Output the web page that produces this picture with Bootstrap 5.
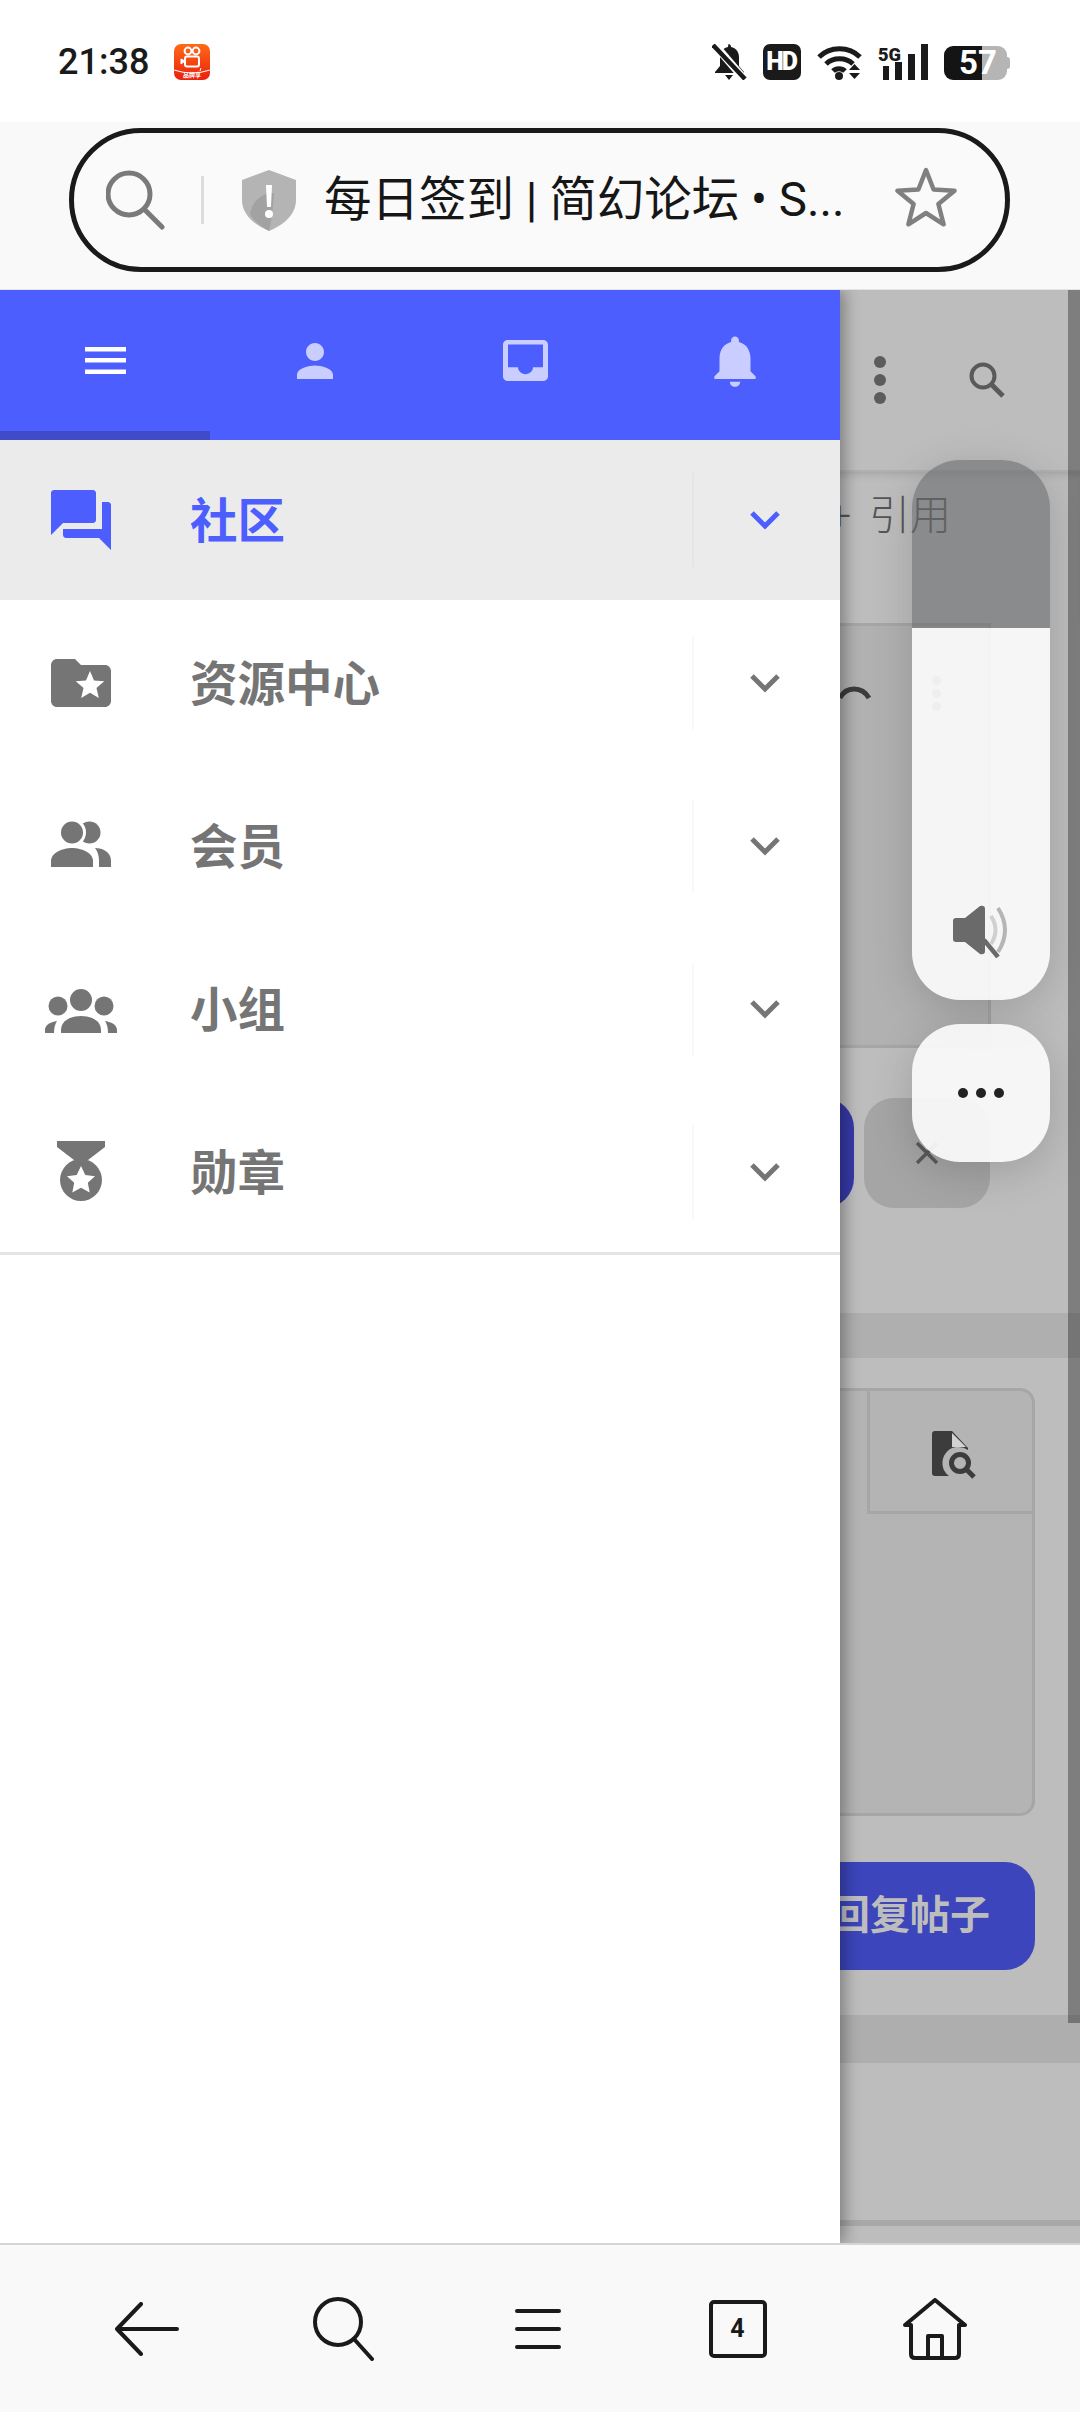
<!DOCTYPE html>
<html lang="zh">
<head>
  <meta charset="UTF-8">
  <title>每日签到 | 简幻论坛</title>
  <link href="https://cdn.jsdelivr.net/npm/bootstrap@5.3.0/dist/css/bootstrap.min.css" rel="stylesheet">
  <style>
    html, body { width: 1080px; height: 2412px; overflow: hidden; }
    body { font-family: Roboto, "Noto Sans CJK SC", sans-serif; background: #fff; }
    svg { display: block; flex-shrink: 0; }

    .status-bar { height: 122px; padding: 44px 70px 0 58px; background: #fff; }
    .clock { font-size: 36px; line-height: 36px; font-weight: 500; color: #1a1a1a; width: 116px; }
    .hd-tag { width: 38px; height: 36px; border-radius: 7px; background: #1a1a1a; color: #fff; font-size: 25px; font-weight: 900; line-height: 36px; text-align: center; letter-spacing: -2px; padding-right: 2px; }
    .sig-ico { margin-top: -2px; }
    .batt { width: 63px; height: 34px; margin-top: 2px; margin-right: 3px; border-radius: 9px; background: linear-gradient(90deg, #141414 38px, #b5b5b5 38px); color: #fff; font-size: 33px; font-weight: 700; line-height: 34px; padding-left: 15px; }
    .batt::after { content: ""; position: absolute; top: 11px; right: -3px; width: 3px; height: 12px; border-radius: 0 3px 3px 0; background: #b5b5b5; }

    .url-bar { height: 168px; padding: 6px 0 0 69px; background: #f9f9f9; border-bottom: 1px solid #e3e3e8; }
    .url-pill { width: 941px; height: 144px; border: 5px solid #1a1a1a; border-radius: 72px; background: #fafafa; padding: 0 48px 0 32px; }
    .url-sep { width: 3px; height: 48px; background: #dcdcdc; margin: 0 38px 0 35px; }
    .url-title { margin-left: 28px; font-size: 47.5px; line-height: 60px; color: #161616; white-space: nowrap; }
    .url-star { margin-top: -6px; }

    .stage { height: 1953px; overflow: hidden; background: #bdbdbd; }
    .hdr-row { height: 180px; padding: 66px 75px 0 0; gap: 83px; }
    .hdr-row svg { margin-top: 6px; }
    .dots-v { gap: 6px; }
    .dots-v i { display: block; width: 12px; height: 12px; border-radius: 50%; background: #5c5c5c; }
    .quote-row { height: 153px; padding: 19px 0 0 828px; font-size: 41px; line-height: 50px; font-weight: 300; color: #555; box-shadow: inset 0 6px 8px -4px rgba(0,0,0,.14); border-top: 2px solid #b0b0b0; }
    .quote-row span { width: 41px; }
    .post-box { width: 991px; height: 425px; padding: 56px 0 0 825px; background: #b1b1b1; border: 0 solid #a6a6a6; border-width: 3px 3px 3px 0; border-bottom-right-radius: 15px; }
    .post-more { margin-left: 57px; margin-top: -6px; gap: 4px; }
    .post-more i { display: block; width: 9px; height: 9px; border-radius: 50%; background: #555; }
    .btn-row { margin-top: 50px; padding-left: 700px; gap: 10px; }
    .btn-send, .btn-cancel { height: 110px; border: 0; border-radius: 30px; padding: 0; }
    .btn-send { width: 154px; background: #3639a8; }
    .btn-cancel { width: 126px; background: #a5a5a5; }
    .band-a { margin-top: 105px; height: 45px; background: #afafaf; }
    .editor { margin-top: 30px; width: 1035px; height: 428px; background: #b4b4b4; border: 3px solid #a6a6a6; border-left: 0; border-radius: 0 15px 15px 0; }
    .editor-cell { width: 165px; height: 123px; padding: 8px 0 0 6px; border-left: 3px solid #a6a6a6; border-bottom: 3px solid #a6a6a6; }
    .reply-wrap { margin-top: 46px; padding-right: 45px; }
    .btn-reply { width: 400px; height: 108px; border: 0; border-radius: 30px; background: #3c45bb; color: #bdbdbd; font-size: 40px; font-weight: 700; line-height: 108px; padding: 0 45px 0 0; text-align: right; }
    .band-b { margin-top: 45px; height: 48px; background: #aeaeae; }
    .rule-b { margin-top: 157px; height: 6px; background: #a8a8a8; }

    .page-scroll { top: 0; right: 0; width: 12px; height: 1733px; background: rgba(0,0,0,.33); }

    .drawer { top: 0; left: 0; bottom: 0; width: 840px; background: #fff; box-shadow: 5px 0 14px rgba(0,0,0,.32); }
    .drawer-tabs { height: 150px; background: #4d5eff; }
    .drawer-tab { width: 210px; height: 150px; padding-bottom: 9px; color: #c9cdff; }
    .drawer-tab.on { color: #fff; border-bottom: 9px solid #3f4bc8; padding-bottom: 0; }
    .list-group-flush > .menu-row { height: 163px; padding: 0 0 0 45px; border: 0; border-bottom: 3px solid transparent; background-clip: padding-box; color: #757575; font-size: 47.5px; font-weight: 700; line-height: 60px; border-radius: 0; }
    .list-group-flush > .menu-row.on { background-color: #ebebec; color: #4d5eff; }
    .list-group-flush > .menu-row.end { border-bottom: 3px solid #e4e4e4; }
    .menu-row span { margin-top: 3px; }
    .menu-ico { width: 72px; height: 72px; margin-right: 73px; }
    .menu-caret { width: 148px; height: 94px; padding-right: 4px; border-left: 2px solid rgba(0,0,0,.025); }

    .vol-panel { top: 170px; left: 912px; width: 138px; height: 540px; border-radius: 48px; overflow: hidden; box-shadow: 0 10px 44px rgba(0,0,0,.16); }
    .vol-fill { height: 168px; background: rgba(104,105,107,.6); }
    .vol-rest { height: 372px; padding-bottom: 42px; background: rgba(250,250,250,.93); }
    .more-panel { top: 734px; left: 912px; width: 138px; height: 138px; border-radius: 48px; gap: 8px; background: rgba(250,250,250,.93); box-shadow: 0 10px 44px rgba(0,0,0,.16); }
    .more-panel i { display: block; width: 10px; height: 10px; border-radius: 50%; background: #222; }

    .bottom-bar { height: 169px; padding: 0 0 0 48px; background: #f9f9f9; border-top: 2px solid #d5d5d5; }
    .bottom-slot { width: 197px; height: 167px; }
    .bottom-slot .menu-lines { margin-right: 6px; }
    .tab-count { width: 58px; height: 58px; border: 4px solid #1a1a1a; border-radius: 5px; font-size: 25px; font-weight: 700; line-height: 50px; text-align: center; color: #1a1a1a; }
  </style>
</head>
<body>
  <div class="status-bar d-flex">
    <div class="clock">21:38</div>
    <svg width="36" height="36" viewBox="0 0 36 36">
      <defs><linearGradient id="appg" x1="0" y1="0" x2="0" y2="1"><stop offset="0" stop-color="#ff6a16"/><stop offset="1" stop-color="#e9200e"/></linearGradient></defs>
      <rect width="36" height="36" rx="7" fill="url(#appg)"/>
      <circle cx="14" cy="7" r="3.4" fill="none" stroke="#fff" stroke-width="2"/>
      <circle cx="22" cy="7" r="3.4" fill="none" stroke="#fff" stroke-width="2"/>
      <rect x="11" y="12.5" width="14" height="10" rx="2" fill="none" stroke="#fff" stroke-width="2"/>
      <path d="M11 17l-4-2v5zM27 24l-1 3" fill="#fff" stroke="#fff" stroke-width="1"/>
      <path d="M0 26q18 6 36 0" fill="none" stroke="#fff" stroke-width="1"/>
      <text x="18" y="33" font-size="6" font-weight="700" text-anchor="middle" fill="#fff" font-family="Noto Sans CJK SC, sans-serif">品牌享</text>
    </svg>
    <div class="d-flex ms-auto gap-3">
      <svg width="35" height="36" viewBox="0 0 35 36">
        <path d="M16 0c2 0 3 1 3 3 5 1 8 5 8 10v9l5 6v1H3v-1l5-6v-9c0-5 3-9 8-10 0-2 1-3 0-3z" fill="#1a1a1a"/>
        <path d="M13 31h8l-4 5z" fill="#1a1a1a"/>
        <path d="M2 0l31 36" stroke="#fff" stroke-width="8"/>
        <path d="M1 1l32 34" stroke="#1a1a1a" stroke-width="4.5"/>
      </svg>
      <div class="hd-tag">HD</div>
      <svg width="45" height="36" viewBox="0 0 45 36" fill="none" stroke="#1a1a1a" stroke-width="5">
        <path d="M2 13C13 2 32 2 43 13"/>
        <path d="M9 20C16 13 29 13 36 20"/>
        <path d="M16 27c3-3 9-3 12 0"/>
        <circle cx="22" cy="32" r="4" fill="#1a1a1a" stroke="none"/>
        <path d="M32 26h11l-5.500-6zM32 29h11l-5.500 6z" fill="#1a1a1a" stroke="none"/>
      </svg>
      <svg class="sig-ico" width="50" height="38" viewBox="0 -2 50 38">
        <text x="0" y="17" font-size="19" font-weight="900" fill="#1a1a1a" font-family="Roboto, sans-serif" textLength="23" lengthAdjust="spacingAndGlyphs">5G</text>
        <rect x="5" y="22" width="6" height="14" fill="#1a1a1a"/>
        <rect x="17" y="18" width="7" height="18" fill="#1a1a1a"/>
        <rect x="30" y="10" width="7" height="26" fill="#1a1a1a"/>
        <rect x="43" y="0" width="7" height="36" fill="#1a1a1a"/>
      </svg>
      <div class="batt position-relative">57</div>
    </div>
  </div>

  <div class="url-bar">
    <div class="url-pill d-flex align-items-center">
      <svg width="60" height="60" viewBox="0 0 60 60" fill="none" stroke="#7a7a7a" stroke-width="5" stroke-linecap="round">
        <circle cx="23" cy="24" r="21"/>
        <path d="M39 40l17 17"/>
      </svg>
      <div class="url-sep"></div>
      <svg width="54" height="61" viewBox="0 0 54 61">
        <path d="M27 0l27 10v20c0 14-12 25-27 31C12 55 0 44 0 30V10z" fill="#b4b4b4"/>
        <path d="M8 44c2-13 12-21 24-21-1 14-2 26-5 38C19 57 12 51 8 44z" fill="#a2a2a2"/>
        <path d="M24 15h6l-1 22h-4z" fill="#fff"/>
        <circle cx="27" cy="44" r="4" fill="#fff"/>
      </svg>
      <div class="url-title">每日签到 | 简幻论坛 • S...</div>
      <svg class="url-star ms-auto" width="62" height="62" viewBox="0 0 62 62">
        <path d="M31 4l7.600 19.500 20.900 1.200-16.100 13.300 5.200 20.300L31 47 13.400 58.300l5.200-20.300L2.500 24.700l20.900-1.200z" fill="none" stroke="#808080" stroke-width="4.500" stroke-linejoin="round"/>
      </svg>
    </div>
  </div>

  <div class="stage position-relative">
    <div class="page-back">
      <div class="hdr-row d-flex justify-content-end">
        <div class="dots-v d-flex flex-column"><i></i><i></i><i></i></div>
        <svg width="36" height="36" viewBox="0 0 36 36" fill="none" stroke="#5a5a5a" stroke-width="4">
          <circle cx="14" cy="14" r="11.500"/>
          <path d="M22 22l12 12" stroke-width="5"/>
        </svg>
      </div>
      <div class="quote-row d-flex"><span>+</span>引用</div>
      <div class="post-box d-flex">
        <svg width="50" height="24" viewBox="0 0 50 24" fill="none" stroke="#3c3c3c" stroke-width="5">
          <path d="M15 16c6-12 22-12 29 0"/>
        </svg>
        <div class="post-more d-flex flex-column"><i></i><i></i><i></i></div>
      </div>
      <div class="btn-row d-flex">
        <button class="btn btn-send" type="button"></button>
        <button class="btn btn-cancel d-flex align-items-center justify-content-center" type="button">
          <svg width="24" height="24" viewBox="0 0 24 24" stroke="#5a5a5a" stroke-width="3.500"><path d="M2 2l20 20M22 2L2 22"/></svg>
        </button>
      </div>
      <div class="band-a"></div>
      <div class="editor d-flex justify-content-end align-items-start">
        <div class="editor-cell d-flex align-items-center justify-content-center">
          <svg width="44" height="48" viewBox="0 0 44 48">
            <path d="M3 0h17l16 17v2a14 14 0 0 0-19 26H3a3 3 0 0 1-3-3V3a3 3 0 0 1 3-3z" fill="#3c3c3c"/>
            <path d="M20 2v14h14z" fill="#d2d2d2"/>
            <circle cx="28" cy="32" r="8.500" fill="none" stroke="#3c3c3c" stroke-width="5"/>
            <path d="M34 38l8 8" stroke="#3c3c3c" stroke-width="5"/>
          </svg>
        </div>
      </div>
      <div class="reply-wrap d-flex justify-content-end">
        <button class="btn btn-reply" type="button">回复帖子</button>
      </div>
      <div class="band-b"></div>
      <div class="rule-b"></div>
    </div>

    <div class="page-scroll position-absolute"></div>

    <div class="vol-panel position-absolute">
      <div class="vol-fill"></div>
      <div class="vol-rest d-flex align-items-end justify-content-center">
        <svg width="56" height="53" viewBox="0 0 56 53" fill="none">
          <path d="M3 13h9L27 1q5-1 5 3v42q0 4-5 3L12 37H3q-3 0-3-3V16q0-3 3-3z" fill="#6a6a6a"/>
          <path d="M31 35l14 17" stroke="#6a6a6a" stroke-width="4.500"/>
          <path d="M38 11q9 14 0 28" stroke="#d0d0d0" stroke-width="4"/>
          <path d="M45 3q14 22 0 44" stroke="#b5b5b5" stroke-width="4"/>
        </svg>
      </div>
    </div>
    <div class="more-panel position-absolute d-flex align-items-center justify-content-center"><i></i><i></i><i></i></div>

    <div class="drawer position-absolute">
      <div class="drawer-tabs d-flex">
        <div class="drawer-tab on d-flex align-items-center justify-content-center">
          <svg width="41" height="27" viewBox="0 0 41 27" fill="currentColor"><rect width="41" height="4.500"/><rect y="11" width="41" height="4.500"/><rect y="22.500" width="41" height="4.500"/></svg>
        </div>
        <div class="drawer-tab d-flex align-items-center justify-content-center">
          <svg width="54" height="54" viewBox="0 0 24 24" fill="currentColor"><path d="M12 12c2.210 0 4-1.790 4-4s-1.790-4-4-4-4 1.790-4 4 1.790 4 4 4zm0 2c-2.670 0-8 1.340-8 4v2h16v-2c0-2.660-5.330-4-8-4z"/></svg>
        </div>
        <div class="drawer-tab d-flex align-items-center justify-content-center">
          <svg width="45" height="41" viewBox="3 3 18 18" preserveAspectRatio="none" fill="currentColor"><path d="M19 3H5c-1.110 0-2 .89-2 2v14c0 1.100.88 2 2 2h14c1.100 0 2-.9 2-2V5c0-1.110-.9-2-2-2zm0 12h-4c0 1.660-1.350 3-3 3s-3-1.340-3-3H5V5h14v10z"/></svg>
        </div>
        <div class="drawer-tab d-flex align-items-center justify-content-center">
          <svg width="62" height="62" viewBox="0 0 24 24" fill="currentColor"><path d="M12 22c1.100 0 2-.9 2-2h-4c0 1.100.89 2 2 2zm6-6v-5c0-3.070-1.640-5.640-4.500-6.320V4c0-.83-.67-1.500-1.500-1.500s-1.500.67-1.500 1.500v.68C7.630 5.360 6 7.920 6 11v5l-2 2v1h16v-1l-2-2z"/></svg>
        </div>
      </div>
      <div class="list-group list-group-flush">
        <div class="list-group-item menu-row on d-flex align-items-center">
          <svg class="menu-ico" viewBox="0 0 24 24" fill="currentColor"><path d="M21 6h-2v9H6v2c0 .55.45 1 1 1h11l4 4V7c0-.55-.45-1-1-1zm-4 6V3c0-.55-.45-1-1-1H3c-.55 0-1 .45-1 1v14l4-4h10c.55 0 1-.45 1-1z"/></svg>
          <span>社区</span>
          <div class="menu-caret ms-auto d-flex align-items-center justify-content-center">
            <svg width="30" height="20" viewBox="0 0 30 20" fill="none" stroke="currentColor" stroke-width="5"><path d="M2 3l13 13L28 3"/></svg>
          </div>
        </div>
        <div class="list-group-item menu-row d-flex align-items-center">
          <svg class="menu-ico" viewBox="0 0 24 24" fill="currentColor"><path d="M20 6h-8l-2-2H4c-1.100 0-1.990.9-1.990 2L2 18c0 1.100.9 2 2 2h16c1.100 0 2-.9 2-2V8c0-1.100-.9-2-2-2zm-2.060 11L15 15.280 12.060 17l.78-3.330-2.590-2.240 3.410-.29L15 8l1.340 3.140 3.410.29-2.590 2.240.78 3.330z"/></svg>
          <span>资源中心</span>
          <div class="menu-caret ms-auto d-flex align-items-center justify-content-center">
            <svg width="30" height="20" viewBox="0 0 30 20" fill="none" stroke="currentColor" stroke-width="5"><path d="M2 3l13 13L28 3"/></svg>
          </div>
        </div>
        <div class="list-group-item menu-row d-flex align-items-center">
          <svg class="menu-ico" viewBox="0 0 72 72" fill="currentColor">
            <circle cx="44.500" cy="22.500" r="11"/>
            <circle cx="27" cy="22.500" r="12.500" stroke="#fff" stroke-width="3"/>
            <path d="M6 57v-6c0-8 11-13 21-13s21 5 21 13v6z"/>
            <path d="M50 38c8 0 16 4 16 13v6H54v-6c0-5-1-9-4-13z"/>
          </svg>
          <span>会员</span>
          <div class="menu-caret ms-auto d-flex align-items-center justify-content-center">
            <svg width="30" height="20" viewBox="0 0 30 20" fill="none" stroke="currentColor" stroke-width="5"><path d="M2 3l13 13L28 3"/></svg>
          </div>
        </div>
        <div class="list-group-item menu-row d-flex align-items-center">
          <svg class="menu-ico" viewBox="0 0 72 72" fill="currentColor">
            <circle cx="13" cy="33" r="9.500"/>
            <circle cx="59" cy="33" r="9.500"/>
            <circle cx="36" cy="27" r="12.500" stroke="#fff" stroke-width="3"/>
            <path d="M16 60v-3c0-9 9-14 20-14s20 5 20 14v3z"/>
            <path d="M0 60v-3c0-5 5-8 12-9-2 3-3 7-3 12z"/>
            <path d="M72 60v-3c0-5-5-8-12-9 2 3 3 7 3 12z"/>
          </svg>
          <span>小组</span>
          <div class="menu-caret ms-auto d-flex align-items-center justify-content-center">
            <svg width="30" height="20" viewBox="0 0 30 20" fill="none" stroke="currentColor" stroke-width="5"><path d="M2 3l13 13L28 3"/></svg>
          </div>
        </div>
        <div class="list-group-item menu-row end d-flex align-items-center">
          <svg class="menu-ico" viewBox="0 1 72 72" fill="currentColor">
            <path d="M12 6h48v6L43 25H29L12 12z"/>
            <circle cx="36" cy="45" r="21"/>
            <path d="M36 31l4.300 9 9.700 1.200-7.200 6.600 1.900 9.700-8.700-4.800-8.700 4.800 1.900-9.700-7.200-6.600 9.700-1.200z" fill="#fff"/>
          </svg>
          <span>勋章</span>
          <div class="menu-caret ms-auto d-flex align-items-center justify-content-center">
            <svg width="30" height="20" viewBox="0 0 30 20" fill="none" stroke="currentColor" stroke-width="5"><path d="M2 3l13 13L28 3"/></svg>
          </div>
        </div>
      </div>
    </div>
  </div>

  <div class="bottom-bar d-flex">
    <div class="bottom-slot d-flex align-items-center justify-content-center">
      <svg width="64" height="54" viewBox="0 0 64 54" fill="none" stroke="#1a1a1a" stroke-width="4" stroke-linecap="round" stroke-linejoin="round"><path d="M26 2L2 27l24 25M2 27h60"/></svg>
    </div>
    <div class="bottom-slot d-flex align-items-center justify-content-center">
      <svg width="62" height="64" viewBox="0 0 62 64" fill="none" stroke="#1a1a1a" stroke-width="4" stroke-linecap="round"><circle cx="25" cy="25" r="23"/><path d="M41 42l18 20"/></svg>
    </div>
    <div class="bottom-slot d-flex align-items-center justify-content-center">
      <svg class="menu-lines" width="46" height="40" viewBox="0 0 46 40" fill="none" stroke="#1a1a1a" stroke-width="4" stroke-linecap="round"><path d="M2 2h42M2 20h42M2 38h42"/></svg>
    </div>
    <div class="bottom-slot d-flex align-items-center justify-content-center">
      <div class="tab-count">4</div>
    </div>
    <div class="bottom-slot d-flex align-items-center justify-content-center">
      <svg width="66" height="62" viewBox="0 0 66 62" fill="none" stroke="#1a1a1a" stroke-width="4" stroke-linejoin="round"><path d="M3 27L33 2l30 25h-6v29q0 4-4 4H13q-4 0-4-4V27z"/><path d="M26 60V38h14v22"/></svg>
    </div>
  </div>
</body>
</html>
